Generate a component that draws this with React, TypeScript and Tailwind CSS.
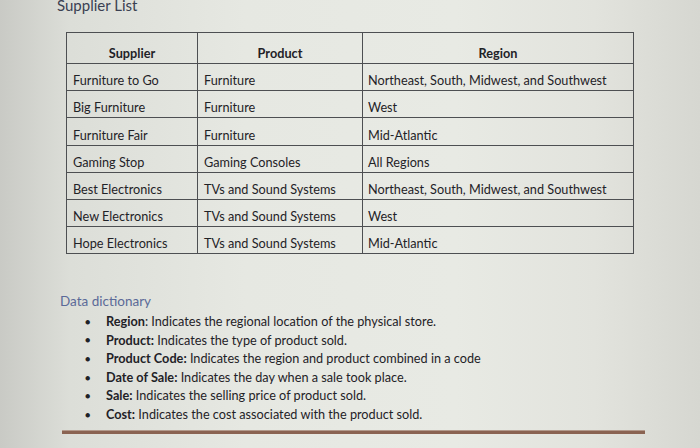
import React from 'react';

type Row = { supplier: string; product: string; region: string };

const rows: Row[] = [
  { supplier: 'Furniture to Go', product: 'Furniture', region: 'Northeast, South, Midwest, and Southwest' },
  { supplier: 'Big Furniture', product: 'Furniture', region: 'West' },
  { supplier: 'Furniture Fair', product: 'Furniture', region: 'Mid-Atlantic' },
  { supplier: 'Gaming Stop', product: 'Gaming Consoles', region: 'All Regions' },
  { supplier: 'Best Electronics', product: 'TVs and Sound Systems', region: 'Northeast, South, Midwest, and Southwest' },
  { supplier: 'New Electronics', product: 'TVs and Sound Systems', region: 'West' },
  { supplier: 'Hope Electronics', product: 'TVs and Sound Systems', region: 'Mid-Atlantic' },
];

const dictionary = [
  { term: 'Region', text: ': Indicates the regional location of the physical store.' },
  { term: 'Product:', text: ' Indicates the type of product sold.' },
  { term: 'Product Code:', text: ' Indicates the region and product combined in a code' },
  { term: 'Date of Sale:', text: ' Indicates the day when a sale took place.' },
  { term: 'Sale:', text: ' Indicates the selling price of product sold.' },
  { term: 'Cost:', text: ' Indicates the cost associated with the product sold.' },
];

export default function App() {
  return (
    <div
      className="w-[700px] h-[448px] overflow-hidden text-[#1f2227] bg-[linear-gradient(90deg,#c9cac5_0%,#dcded8_10%,#e6e8e2_35%,#e8eae4_65%,#e2e3dd_85%,#d6d7d1_100%)]"
      style={{ fontFamily: 'Lato, "Open Sans", sans-serif' }}
    >
      <div className="pl-[57px] -mt-[4px] text-[15px] leading-[18px] text-[#3a4052]">Supplier List</div>

      <table className="ml-[66px] mt-[18px] border-collapse border border-[#4d4f52] text-[12.7px]">
        <thead>
          <tr className="h-[31px]">
            <th className="w-[131px] border border-[#4d4f52] align-bottom pb-0 font-bold">Supplier</th>
            <th className="w-[165px] border border-[#4d4f52] align-bottom pb-0 font-bold">Product</th>
            <th className="w-[271px] border border-[#4d4f52] align-bottom pb-0 font-bold">Region</th>
          </tr>
        </thead>
        <tbody>
          {rows.map((r) => (
            <tr key={r.supplier} className="h-[27.2px]">
              <td className="border border-[#4d4f52] align-bottom pl-[6px] pb-0 whitespace-nowrap">{r.supplier}</td>
              <td className="border border-[#4d4f52] align-bottom pl-[6px] pb-0 whitespace-nowrap">{r.product}</td>
              <td className="border border-[#4d4f52] align-bottom pl-[5px] pb-0 whitespace-nowrap">{r.region}</td>
            </tr>
          ))}
        </tbody>
      </table>

      <div className="pl-[60px] mt-[39px] text-[13.5px] leading-[16px] text-[#5b6a98]">Data dictionary</div>

      <ul className="mt-[3px] pl-[85px] text-[12.7px]">
        {dictionary.map((d) => (
          <li key={d.term} className="flex items-center h-[18.6px]">
            <span className="w-[21px] text-[9px]">●</span>
            <span>
              <span className="font-bold">{d.term}</span>
              {d.text}
            </span>
          </li>
        ))}
      </ul>

      <div className="ml-[62px] mt-[6px] w-[583px] h-[4px] bg-[#8a6352] border-t border-[#b39a8c]" />
    </div>
  );
}
